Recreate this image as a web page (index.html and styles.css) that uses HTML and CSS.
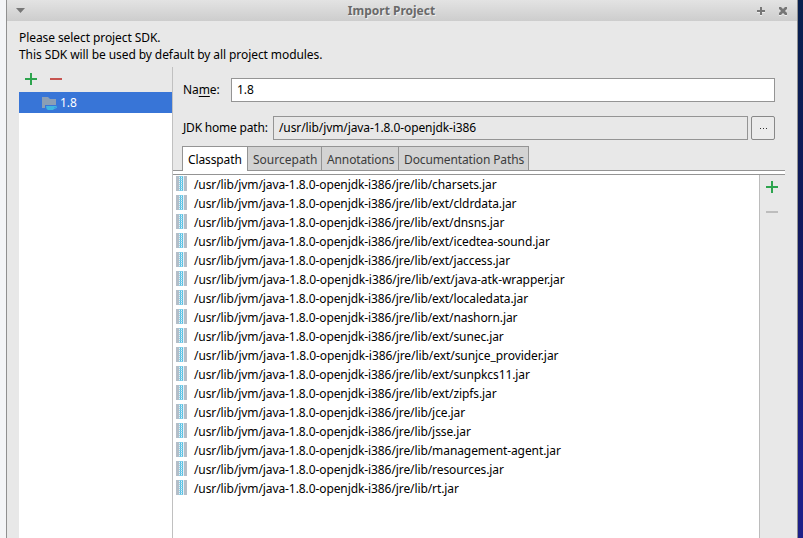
FILE: index.html
```html
<!DOCTYPE html>
<html lang="en">
<head>
<meta charset="utf-8">
<title>Import Project</title>
<link rel="stylesheet" href="styles.css">
</head>
<body>
<svg class="defs" aria-hidden="true">
  <symbol id="plus" viewBox="0 0 12 12"><path d="M5 0h2v5h5v2H7v5H5V7H0V5h5z"/></symbol>
  <symbol id="minus" viewBox="0 0 12 12"><path d="M0 5h12v2H0z"/></symbol>
  <symbol id="jar" viewBox="0 0 11 15"><path fill="#b4bec8" d="M0 0h11v15H0z"/><path fill="#e6f1f6" d="M3 0h5v15H3z"/><path stroke="#74cbe8" d="M4.500 0v15M6.500 0v15"/><path stroke="#49bce3" stroke-dasharray="1 1" d="M4.500 1v14M6.500 1v14"/><path stroke="#8fd3ea" stroke-dasharray="1 1" d="M3.500 0v15M5.500 0v15"/></symbol>
</svg>
<div class="window">
  <header class="titlebar">
    <svg class="roll" viewBox="0 0 9 5"><path d="M0 0h9L4.500 5z"/></svg>
    <h1>Import Project</h1>
    <svg class="max" viewBox="0 0 8 8"><path d="M3 0h2v3h3v2H5v3H3V5H0V3h3z"/></svg>
    <svg class="close" viewBox="0 0 8 8"><path d="M0 0h2l2 2 2-2h2v2L6 4l2 2v2H6L4 6 2 8H0V6l2-2-2-2z"/></svg>
  </header>
  <div class="intro"><p>Please select project SDK.</p><p>This SDK will be used by default by all project modules.</p></div>
  <main>
    <aside>
      <div class="tools"><svg class="green"><use href="#plus"/></svg><svg class="red"><use href="#minus"/></svg></div>
      <div class="tree"><div class="selected">
        <svg class="folder" viewBox="0 0 15 13"><path fill="#8b9fb5" d="M0 0h6l2 2h6v9H0z"/><path fill="#3a76d8" d="M3 8h12v5H3z"/><path fill="#40b6e0" d="M4 9h9.500q1.500 0 1.500 1.300T12 12l-1 1H6q-2-1-2-4z"/><path fill="#3a76d8" d="M12.500 10h1v.8h-1z"/></svg><span>1.8</span>
      </div></div>
    </aside>
    <section class="details">
      <div class="row name"><label>Na<u>m</u>e:</label><div class="field">1.8</div></div>
      <div class="row path"><label>JDK home path:</label><div class="field">/usr/lib/jvm/java-1.8.0-openjdk-i386</div><button><i></i><i></i><i></i></button></div>
      <nav><span class="tab active">Classpath</span><span class="tab source">Sourcepath</span><span class="tab annot">Annotations</span><span class="tab docs">Documentation Paths</span></nav>
      <div class="band"></div>
      <div class="content">
        <ul>
          <li><svg><use href="#jar"/></svg><span>/usr/lib/jvm/java-1.8.0-openjdk-i386/jre/lib/charsets.jar</span></li>
          <li><svg><use href="#jar"/></svg><span>/usr/lib/jvm/java-1.8.0-openjdk-i386/jre/lib/ext/cldrdata.jar</span></li>
          <li><svg><use href="#jar"/></svg><span>/usr/lib/jvm/java-1.8.0-openjdk-i386/jre/lib/ext/dnsns.jar</span></li>
          <li><svg><use href="#jar"/></svg><span>/usr/lib/jvm/java-1.8.0-openjdk-i386/jre/lib/ext/icedtea-sound.jar</span></li>
          <li><svg><use href="#jar"/></svg><span>/usr/lib/jvm/java-1.8.0-openjdk-i386/jre/lib/ext/jaccess.jar</span></li>
          <li><svg><use href="#jar"/></svg><span class="wide">/usr/lib/jvm/java-1.8.0-openjdk-i386/jre/lib/ext/java-atk-wrapper.jar</span></li>
          <li><svg><use href="#jar"/></svg><span>/usr/lib/jvm/java-1.8.0-openjdk-i386/jre/lib/ext/localedata.jar</span></li>
          <li><svg><use href="#jar"/></svg><span>/usr/lib/jvm/java-1.8.0-openjdk-i386/jre/lib/ext/nashorn.jar</span></li>
          <li><svg><use href="#jar"/></svg><span>/usr/lib/jvm/java-1.8.0-openjdk-i386/jre/lib/ext/sunec.jar</span></li>
          <li><svg><use href="#jar"/></svg><span class="wide">/usr/lib/jvm/java-1.8.0-openjdk-i386/jre/lib/ext/sunjce_provider.jar</span></li>
          <li><svg><use href="#jar"/></svg><span>/usr/lib/jvm/java-1.8.0-openjdk-i386/jre/lib/ext/sunpkcs11.jar</span></li>
          <li><svg><use href="#jar"/></svg><span>/usr/lib/jvm/java-1.8.0-openjdk-i386/jre/lib/ext/zipfs.jar</span></li>
          <li><svg><use href="#jar"/></svg><span>/usr/lib/jvm/java-1.8.0-openjdk-i386/jre/lib/jce.jar</span></li>
          <li><svg><use href="#jar"/></svg><span>/usr/lib/jvm/java-1.8.0-openjdk-i386/jre/lib/jsse.jar</span></li>
          <li><svg><use href="#jar"/></svg><span>/usr/lib/jvm/java-1.8.0-openjdk-i386/jre/lib/management-agent.jar</span></li>
          <li><svg><use href="#jar"/></svg><span>/usr/lib/jvm/java-1.8.0-openjdk-i386/jre/lib/resources.jar</span></li>
          <li><svg><use href="#jar"/></svg><span>/usr/lib/jvm/java-1.8.0-openjdk-i386/jre/lib/rt.jar</span></li>
        </ul>
        <div class="side-tools"><svg class="green"><use href="#plus"/></svg><svg class="grey"><use href="#minus"/></svg></div>
      </div>
    </section>
  </main>
</div>
</body>
</html>
```
FILE: styles.css
```css
* { box-sizing: border-box; }
body { margin: 0; height: 538px; overflow: hidden; display: flex; padding: 0 5px 0 6px; background: linear-gradient(90deg, #f4f5f7 50%, transparent 50%), linear-gradient(#08204e, #10195c 40%, #1d2088 85%); font: 12px/19px "Noto Sans", sans-serif; letter-spacing: -.08px; color: #000; }
svg { display: block; flex: none; }
.defs { position: absolute; width: 0; height: 0; }
.window { width: 792px; height: 538px; border: solid #909090; border-width: 0 1px; background: #e8e8e8; display: flex; flex-direction: column; }
.titlebar { height: 21px; flex: none; display: flex; align-items: center; padding: 0 9px; background: linear-gradient(#e3e3e3, #cdcdcd); fill: #777; }
.titlebar h1 { flex: 1; margin: 0; padding-left: 1px; text-align: center; font-size: 12px; line-height: 20px; color: #696969; text-shadow: 1px 1px #eee; letter-spacing: 0; }
.roll { width: 9px; height: 5px; }
.max, .close { width: 8px; height: 8px; filter: drop-shadow(0 1px #eee); }
.close { margin: 0 1px 0 14px; }
.intro { height: 46px; flex: none; padding: 8px 0 0 12px; }
.intro p { margin: 0; line-height: 17px; }
main { flex: 1; display: flex; padding-left: 12px; min-height: 0; }
aside { width: 153px; display: flex; flex-direction: column; }
.tools { height: 25px; display: flex; gap: 13px; padding: 6px 0 0 6px; }
.tools svg, .side-tools svg { width: 12px; height: 12px; }
.green { fill: #2da44e; }
.red { fill: #c75450; }
.grey { fill: #bdbdbd; }
.tree { flex: 1; background: #fff; }
.selected { height: 21px; background: #3875d7; color: #fff; display: flex; padding-left: 23px; line-height: 21px; }
.folder { width: 15px; height: 13px; margin: 5px 3px 0 0; }
.details { width: 613px; border-left: 1px solid #c0c0c0; display: flex; flex-direction: column; }
.row { display: flex; height: 24px; flex: none; padding: 0 10px; line-height: 22px; }
.row label { flex: none; line-height: 24px; }
.name { margin-top: 11px; }
.name label { width: 48px; }
.path { margin-top: 14px; }
.path label { width: 90px; letter-spacing: -.2px; }
u { text-underline-offset: 2px; text-decoration-skip-ink: none; }
.field { flex: 1; border: 1px solid #949494; padding-left: 5px; }
.name .field { background: #fff; }
.path .field { letter-spacing: -.1px; }
button { width: 24px; height: 24px; margin-left: 3px; padding: 0; border: 1px solid #888; border-radius: 2px; background: #ebebeb; display: flex; gap: 2px; align-items: center; justify-content: center; }
button i { width: 1px; height: 1px; background: #333; }
nav { display: flex; height: 24px; flex: none; margin-top: 6px; padding-left: 9px; position: relative; z-index: 1; }
.tab { border: 1px solid #949494; border-width: 1px 1px 0 0; background: #d3d3d3; color: #3c3c3c; padding-left: 5px; line-height: 26px; white-space: nowrap; letter-spacing: -.12px; }
.active { width: 66px; border-left-width: 1px; background: #fff; color: #000; height: 25px; }
.source { width: 74px; letter-spacing: 0; }
.annot { width: 77px; }
.docs { width: 130px; }
.band { height: 5px; flex: none; border: solid #949494; border-width: 1px 0; background: #fff; }
.content { flex: 1; display: flex; min-height: 0; }
ul { margin: 0; padding: 1px 0 0 3px; width: 586px; list-style: none; background: #fff; }
li { display: flex; height: 19px; gap: 7px; white-space: nowrap; }
li svg { width: 11px; height: 15px; }
li span { line-height: 18px; letter-spacing: -.09px; }
li .wide { letter-spacing: -.065px; }
.side-tools { border-left: 1px solid #bcbcbc; padding: 6px 0 0 6px; display: flex; flex-direction: column; gap: 13px; }
```
